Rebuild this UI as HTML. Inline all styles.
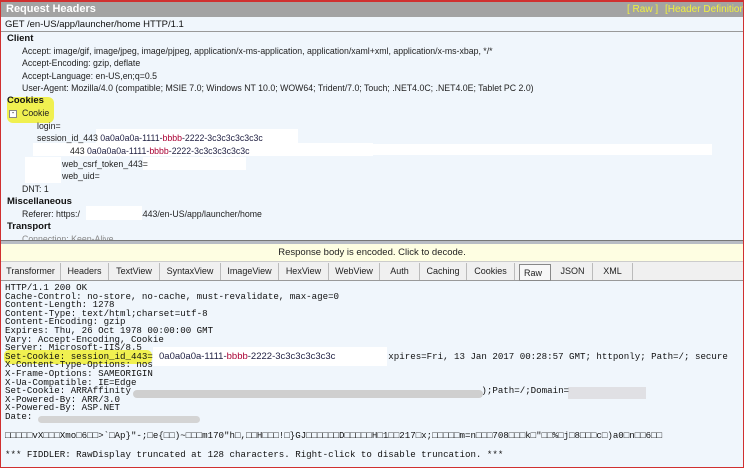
<!DOCTYPE html>
<html><head><style>
*{margin:0;padding:0;box-sizing:border-box}
body{width:744px;height:468px;overflow:hidden;background:#f0f6fc;font-family:"Liberation Sans",sans-serif;position:relative}
.frame{position:absolute;left:0;top:0;width:744px;height:468px;border:1px solid #d03030;border-top-width:2px}
.hdr{position:absolute;left:1px;top:2px;width:742px;height:15px;background:#a3a3a3;color:#fff;font-weight:bold;font-size:11px;line-height:15px;padding-left:5px;white-space:nowrap;overflow:hidden}
.hdr span{position:absolute;top:0;font-weight:normal;color:#f0f040;font-size:10px;white-space:nowrap}
.get{position:absolute;left:1px;top:17px;width:742px;height:15px;border-bottom:1px solid #999;font-size:9.5px;line-height:15px;padding-left:4px;color:#111;background:#f0f6fc}
.t{position:absolute;font-size:8.75px;color:#222;white-space:nowrap}
.b{font-weight:bold;font-size:9.5px;color:#111}
.w{position:absolute;background:#fff}
.split{position:absolute;left:1px;top:240px;width:742px;height:4px;background:#b8bcc4;border-top:1px solid #777}
.yb{position:absolute;left:1px;top:244px;width:742px;height:18px;background:#fefee2;border-bottom:1px solid #ccc;font-size:9.5px;text-align:center;line-height:18px;color:#222}
.tabs{position:absolute;left:1px;top:262px;width:742px;height:19px;background:#f0f0f0;border-bottom:1px solid #999}
.tab{position:absolute;top:1px;height:17px;border-right:1px solid #bbb;font-size:9px;line-height:16px;text-align:center;color:#222}
.mono{position:absolute;left:5px;font-family:"Liberation Mono",monospace;font-size:9.15px;line-height:8.6px;color:#111;white-space:pre}
</style></head><body>
<div class="frame"></div>
<div class="hdr">Request Headers<span style="left:626px">[ Raw ]</span><span style="left:664px">[Header Definitions]</span></div>
<div class="get">GET /en-US/app/launcher/home HTTP/1.1</div>
<div style="position:absolute;left:7px;top:97px;width:47px;height:26px;background:#f0f050;border-radius:6px"></div>
<div class="t b" style="left:7px;top:33px">Client</div>
<div class="t" style="left:22px;top:46px">Accept: image/gif, image/jpeg, image/pjpeg, application/x-ms-application, application/xaml+xml, application/x-ms-xbap, */*</div>
<div class="t" style="left:22px;top:58px">Accept-Encoding: gzip, deflate</div>
<div class="t" style="left:22px;top:71px">Accept-Language: en-US,en;q=0.5</div>
<div class="t" style="left:22px;top:83px">User-Agent: Mozilla/4.0 (compatible; MSIE 7.0; Windows NT 10.0; WOW64; Trident/7.0; Touch; .NET4.0C; .NET4.0E; Tablet PC 2.0)</div>
<div class="t b" style="left:7px;top:95px">Cookies</div>
<div style="position:absolute;left:9px;top:110px;width:8px;height:8px;border:1px solid #888;background:#fff;font-size:7px;line-height:5px;text-align:center">-</div>
<div class="t" style="left:22px;top:108px">Cookie</div>
<div class="t" style="left:37px;top:121px">login=</div>
<div class="w" style="left:96px;top:129px;width:202px;height:14px"></div>
<div class="w" style="left:33px;top:143px;width:340px;height:13px"></div>
<div class="w" style="left:372px;top:144px;width:340px;height:11px"></div>
<div class="w" style="left:25px;top:157px;width:36px;height:26px"></div>
<div class="w" style="left:143px;top:157px;width:103px;height:13px"></div>
<div class="t" style="left:37px;top:133px">session_id_443 <span style="color:#224">0a0a0a0a-1111-<span style="color:#a03">bbbb</span>-2222-3c3c3c3c3c3c</span></div>
<div class="t" style="left:70px;top:146px">443 <span style="color:#224">0a0a0a0a-1111-<span style="color:#a03">bbbb</span>-2222-3c3c3c3c3c3c</span></div>
<div class="t" style="left:62px;top:159px">web_csrf_token_443=</div>
<div class="t" style="left:62px;top:171px">web_uid=</div>
<div class="t" style="left:22px;top:184px">DNT: 1</div>
<div class="t b" style="left:7px;top:196px">Miscellaneous</div>
<div class="t" style="left:22px;top:209px">Referer: https:/<span style="display:inline-block;width:58px"></span>4443/en-US/app/launcher/home</div>
<div class="w" style="left:86px;top:206px;width:56px;height:14px"></div>
<div class="t b" style="left:7px;top:221px">Transport</div>
<div class="t" style="left:22px;top:234px;color:#888">Connection: Keep-Alive</div>
<div class="split"></div>
<div class="yb">Response body is encoded. Click to decode.</div>
<div class="tabs">
<div class="tab" style="left:0;width:60px">Transformer</div>
<div class="tab" style="left:60px;width:48px">Headers</div>
<div class="tab" style="left:108px;width:51px">TextView</div>
<div class="tab" style="left:159px;width:61px">SyntaxView</div>
<div class="tab" style="left:220px;width:58px">ImageView</div>
<div class="tab" style="left:278px;width:50px">HexView</div>
<div class="tab" style="left:328px;width:51px">WebView</div>
<div class="tab" style="left:379px;width:40px">Auth</div>
<div class="tab" style="left:419px;width:47px">Caching</div>
<div class="tab" style="left:466px;width:48px">Cookies</div>
<div class="tab" style="left:518px;top:2px;width:32px;background:#f8f8f8;border:1px solid #888;text-align:left;padding-left:4px">Raw</div>
<div class="tab" style="left:552px;width:40px">JSON</div>
<div class="tab" style="left:592px;width:40px">XML</div>
</div>
<div style="position:absolute;left:4px;top:350px;width:148px;height:14px;background:#f0f050;border-radius:5px"></div>
<div class="w" style="left:153px;top:347px;width:234px;height:19px"></div>
<div style="position:absolute;left:133px;top:390px;width:350px;height:8px;background:#cfcfcf;border-radius:4px"></div>
<div style="position:absolute;left:568px;top:387px;width:78px;height:12px;background:#e0e0e4"></div>
<div style="position:absolute;left:38px;top:416px;width:162px;height:7px;background:#d4d4d4;border-radius:4px"></div>
<div class="mono" style="top:284px">HTTP/1.1 200 OK
Cache-Control: no-store, no-cache, must-revalidate, max-age=0
Content-Length: 1278
Content-Type: text/html;charset=utf-8
Content-Encoding: gzip
Expires: Thu, 26 Oct 1978 00:00:00 GMT
Vary: Accept-Encoding, Cookie
Server: Microsoft-IIS/8.5
Set-Cookie: session_id_443=                                           xpires=Fri, 13 Jan 2017 00:28:57 GMT; httponly; Path=/; secure
X-Content-Type-Options: nos
X-Frame-Options: SAMEORIGIN
X-Ua-Compatible: IE=Edge
Set-Cookie: ARRAffinity                                                                );Path=/;Domain=
X-Powered-By: ARR/3.0
X-Powered-By: ASP.NET
Date:</div>
<div class="mono" style="top:432px">□□□□□vX□□□Xmo□6□□>`□Ap}"-;□e{□□)~□□□m170"h□,□□H□□□!□}GJ□□□□□□D□□□□□H□1□□217□x;□□□□□m=n□□□708□□□k□"□□%□j□8□□□c□)a0□n□□6□□</div>
<div class="mono" style="top:451px">*** FIDDLER: RawDisplay truncated at 128 characters. Right-click to disable truncation. ***</div>
<div class="t" style="left:159px;top:351px;font-size:9.5px;color:#224">0a0a0a0a-1111-<span style="color:#a03">bbbb</span>-2222-3c3c3c3c3c3c</div>
</body></html>
